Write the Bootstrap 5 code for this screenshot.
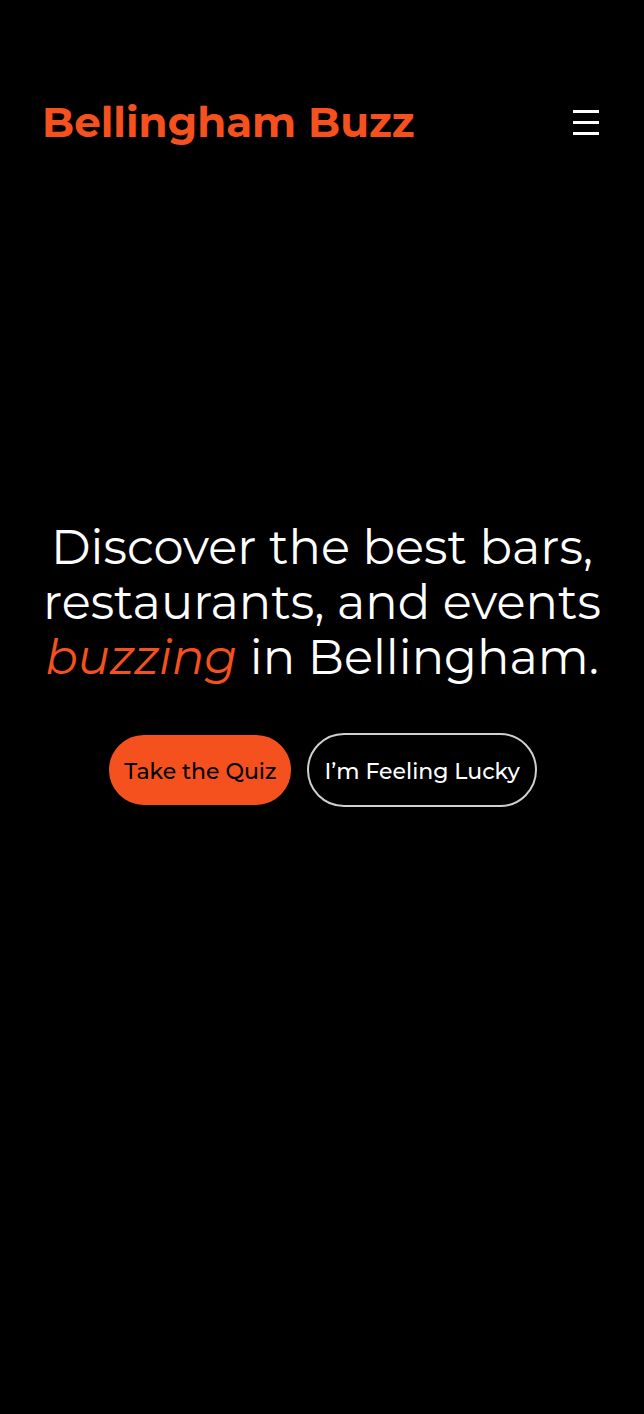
<!DOCTYPE html>
<html lang="en">
<head>
<meta charset="utf-8">
<meta name="viewport" content="width=device-width, initial-scale=1">
<title>Bellingham Buzz</title>
<link href="https://cdn.jsdelivr.net/npm/bootstrap@5.3.0/dist/css/bootstrap.min.css" rel="stylesheet">
<style>
  body { background: #000; color: #fff; font-family: Montserrat, Inter, "Open Sans", sans-serif; }
  .site-header { padding: 90px 44px 0 42px; }
  .brand, .brand:hover { color: #f4511e; }
  .brand { font-size: 42px; line-height: 64px; font-weight: 700; }
  .menu-btn { width: 28px; height: 28px; }
  .hero { padding: 0 32px 242px; }
  .hero-title { font-size: 48px; line-height: 55px; font-weight: 400; margin-bottom: 48px; }
  .hero-title em { color: #f4511e; }
  .hero-actions { gap: 14px; }
  .pill { height: 74px; border-radius: 37px; font-size: 22px; font-weight: 500; padding: 4px 15px 0; border-width: 2px; }
  .pill-fill, .pill-fill:hover { background: #f4511e; border-color: #000; color: #000; }
  .pill-line, .pill-line:hover { background: #000; border-color: #d0d0d0; color: #fff; }
</style>
</head>
<body class="d-flex flex-column min-vh-100">
<header class="site-header d-flex justify-content-between align-items-center">
  <a href="#" class="brand text-decoration-none">Bellingham Buzz</a>
  <button type="button" class="menu-btn btn p-0 border-0 d-flex" aria-label="Menu">
    <svg width="28" height="28" viewBox="0 0 28 28" fill="#fff" aria-hidden="true"><path d="M1 2h26v3H1zM1 13h26v3H1zM1 24h26v3H1z"/></svg>
  </button>
</header>
<main class="hero flex-grow-1 d-flex flex-column justify-content-center text-center">
  <h1 class="hero-title">Discover the best bars, restaurants, and events <em>buzzing</em> in Bellingham.</h1>
  <div class="hero-actions d-flex flex-wrap justify-content-center">
    <button type="button" class="btn pill pill-fill">Take the Quiz</button>
    <button type="button" class="btn pill pill-line">I’m Feeling Lucky</button>
  </div>
</main>
<script src="https://cdn.jsdelivr.net/npm/bootstrap@5.3.0/dist/js/bootstrap.bundle.min.js"></script>
</body>
</html>
